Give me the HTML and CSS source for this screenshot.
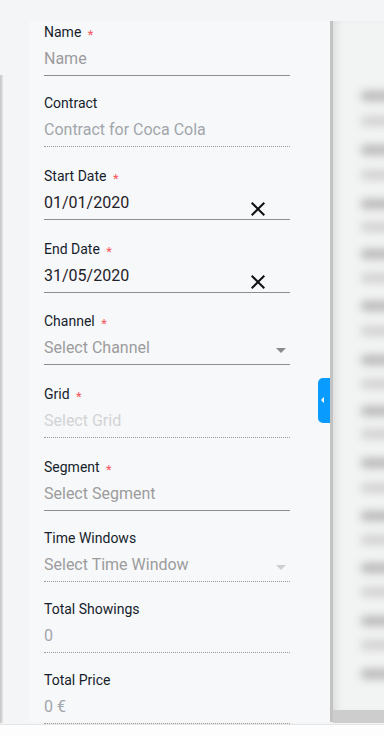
FILE: index.html
```html
<!DOCTYPE html>
<html lang="en">
<head>
  <meta charset="UTF-8">
  <title>Campaign form</title>
  <link rel="stylesheet" href="styles.css">
</head>
<body>
  <!-- blurred page behind the drawer -->
  <div class="backdrop">
    <div class="backdrop-edge"></div>
    <div class="backdrop-card">
      <span class="ghost" style="top:70px"></span>
      <span class="ghost short" style="top:95px"></span>
      <span class="ghost" style="top:124px"></span>
      <span class="ghost short" style="top:149px"></span>
      <span class="ghost" style="top:178px"></span>
      <span class="ghost short" style="top:201px"></span>
      <span class="ghost" style="top:228px"></span>
      <span class="ghost short" style="top:252px"></span>
      <span class="ghost" style="top:280px"></span>
      <span class="ghost short" style="top:305px"></span>
      <span class="ghost" style="top:334px"></span>
      <span class="ghost short" style="top:358px"></span>
      <span class="ghost" style="top:385px"></span>
      <span class="ghost short" style="top:408px"></span>
      <span class="ghost" style="top:437px"></span>
      <span class="ghost short" style="top:462px"></span>
      <span class="ghost" style="top:490px"></span>
      <span class="ghost short" style="top:514px"></span>
      <span class="ghost" style="top:542px"></span>
      <span class="ghost short" style="top:566px"></span>
      <span class="ghost" style="top:595px"></span>
      <span class="ghost short" style="top:619px"></span>
      <span class="ghost" style="top:648px"></span>
    </div>
    <div class="backdrop-foot"></div>
    <div class="backdrop-bar"></div>
  </div>

  <aside class="drawer">
    <form class="form">
      <div class="field gap-18">
        <label class="field-label">Name <span class="req">*</span></label>
        <div class="control"><span class="placeholder">Name</span></div>
      </div>

      <div class="field gap-20">
        <label class="field-label">Contract</label>
        <div class="control control--readonly"><span class="muted">Contract for Coca Cola</span></div>
      </div>

      <div class="field gap-20">
        <label class="field-label">Start Date <span class="req">*</span></label>
        <div class="control">
          <span class="value">01/01/2020</span>
          <svg class="clear" viewBox="0 0 24 24" width="24" height="24"><path d="M19 6.41L17.59 5 12 10.59 6.41 5 5 6.41 10.59 12 5 17.59 6.41 19 12 13.41 17.59 19 19 17.59 13.41 12z"/></svg>
        </div>
      </div>

      <div class="field gap-19">
        <label class="field-label">End Date <span class="req">*</span></label>
        <div class="control">
          <span class="value">31/05/2020</span>
          <svg class="clear" viewBox="0 0 24 24" width="24" height="24"><path d="M19 6.41L17.59 5 12 10.59 6.41 5 5 6.41 10.59 12 5 17.59 6.41 19 12 13.41 17.59 19 19 17.59 13.41 12z"/></svg>
        </div>
      </div>

      <div class="field gap-20">
        <label class="field-label">Channel <span class="req">*</span></label>
        <div class="control"><span class="placeholder">Select Channel</span><i class="caret"></i></div>
      </div>

      <div class="field gap-20">
        <label class="field-label">Grid <span class="req">*</span></label>
        <div class="control control--readonly"><span class="disabled">Select Grid</span></div>
      </div>

      <div class="field gap-18">
        <label class="field-label">Segment <span class="req">*</span></label>
        <div class="control"><span class="placeholder">Select Segment</span></div>
      </div>

      <div class="field gap-18">
        <label class="field-label">Time Windows</label>
        <div class="control control--readonly"><span class="placeholder">Select Time Window</span><i class="caret caret--off"></i></div>
      </div>

      <div class="field gap-18">
        <label class="field-label">Total Showings</label>
        <div class="control control--readonly"><span class="muted">0</span></div>
      </div>

      <div class="field">
        <label class="field-label">Total Price</label>
        <div class="control control--readonly"><span class="muted">0 €</span></div>
      </div>
    </form>
  </aside>

  <button class="drawer-tab" type="button" aria-label="Collapse"></button>
</body>
</html>
```

FILE: styles.css
```css
/* Drawer form over a blurred list page */

:root {
  --page-bg:     #f4f5f7;
  --drawer-bg:   #f7f8fa;
  --label:       #161d2b;
  --value:       #1f2228;
  --placeholder: #9c9c9c;
  --muted:       #a2a6ab;
  --disabled:    #d2d3d5;
  --line:        #8e8e8e;
  --dots:        #9a9a9a;
  --required:    #f5575d;
  --accent:      #0a9bff;
}

html, body {
  margin: 0;
  width: 384px;
  height: 736px;
  overflow: hidden;
}

body {
  position: relative;
  background: var(--page-bg);
  font-family: Roboto, "Noto Sans", sans-serif;
}

/* ---- backdrop ---- */
.backdrop-edge {
  position: absolute;
  left: 0;
  top: 75px;
  width: 3px;
  height: 648px;
  background: linear-gradient(to right, #c4c4c4, #e6e6e6);
}

.backdrop-card {
  position: absolute;
  left: 333px;
  top: 21px;
  width: 60px;
  height: 689px;
  background: #f2f3f3;
  box-shadow: inset 8px 0 10px -6px #d6d6d6;
  overflow: hidden;
}

.ghost {
  position: absolute;
  left: 28px;
  width: 40px;
  height: 10px;
  background: #b9b9b9;
  border-radius: 4px;
  filter: blur(4px);
}
.ghost.short {
  background: #d2d2d2;
}

.backdrop-foot {
  position: absolute;
  left: 333px;
  top: 710px;
  width: 51px;
  height: 13px;
  background: #cdcdcd;
}

.backdrop-bar {
  position: absolute;
  left: 0;
  top: 724px;
  width: 384px;
  height: 12px;
  background: #fdfdfd;
  border-top: 1px solid #e4e4e4;
}

/* ---- drawer ---- */
.drawer {
  position: absolute;
  left: 30px;
  top: 21px;
  width: 300px;
  height: 701px;
  background: var(--drawer-bg);
  border-right: 3px solid #c3c3c3;
  box-sizing: content-box;
}

.form {
  padding: 2px 0 0 14px;
  width: 246px;
}

.field-label {
  display: block;
  height: 18px;
  line-height: 18px;
  font-size: 14px;
  font-weight: 400;
  color: var(--label);
  margin-bottom: 2px;
}

.req {
  color: var(--required);
  font-size: 13px;
  margin-left: 3px;
  position: relative;
  top: 2px;
}

.control {
  position: relative;
  height: 32px;
  line-height: 32px;
  font-size: 16px;
  border-bottom: 1px solid var(--line);
  white-space: nowrap;
}
.control--readonly {
  border-bottom: 1px dotted var(--dots);
}

.placeholder { color: var(--placeholder); }
.muted       { color: var(--muted); }
.disabled    { color: var(--disabled); }
.value       { color: var(--value); }

.gap-18 { margin-bottom: 18px; }
.gap-19 { margin-bottom: 19px; }
.gap-20 { margin-bottom: 20px; }

.clear {
  position: absolute;
  right: 20px;
  bottom: -2px;
  fill: #111;
}

.caret {
  position: absolute;
  right: 4px;
  top: 16px;
  width: 0;
  height: 0;
  border-left: 5.5px solid transparent;
  border-right: 5.5px solid transparent;
  border-top: 5px solid #8a8a8a;
}
.caret--off {
  border-top-color: #cfcfcf;
}

/* collapse tab on the drawer edge */
.drawer-tab {
  position: absolute;
  left: 318px;
  top: 378px;
  width: 12px;
  height: 45px;
  padding: 0;
  border: 0;
  border-radius: 5px 0 0 5px;
  background: var(--accent);
}
.drawer-tab::after {
  content: "";
  position: absolute;
  left: 3px;
  top: 19px;
  border-top: 3px solid transparent;
  border-bottom: 3px solid transparent;
  border-right: 3px solid #fff;
}
```
